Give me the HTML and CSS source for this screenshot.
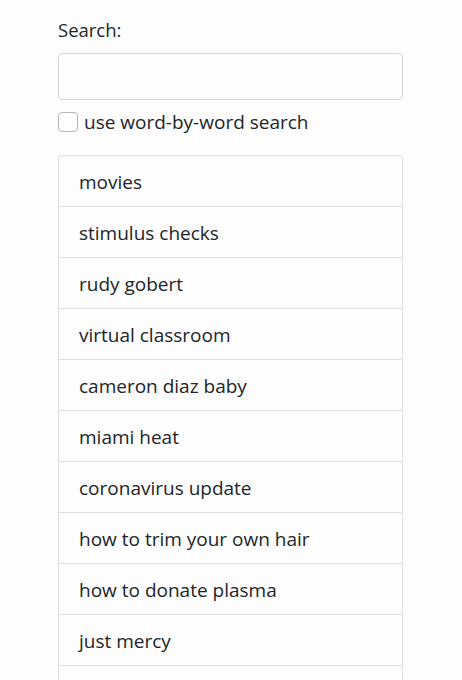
FILE: index.html
```html
<!DOCTYPE html>
<html>
<head>
<meta charset="utf-8">
<link rel="stylesheet" href="styles.css">
</head>
<body>
<div class="page">
  <label class="search-label" for="q">Search:</label>
  <input class="search-input" id="q" type="text">
  <div class="check-row">
    <span class="checkbox"></span>
    <span class="check-text">use word-by-word search</span>
  </div>
  <ul class="list">
    <li class="item">movies</li>
    <li class="item">stimulus checks</li>
    <li class="item">rudy gobert</li>
    <li class="item">virtual classroom</li>
    <li class="item">cameron diaz baby</li>
    <li class="item">miami heat</li>
    <li class="item">coronavirus update</li>
    <li class="item">how to trim your own hair</li>
    <li class="item">how to donate plasma</li>
    <li class="item">just mercy</li>
    <li class="item item-empty"></li>
  </ul>
</div>
</body>
</html>
```

FILE: styles.css
```css
html, body {
  margin: 0;
  padding: 0;
  background: #fdfdfd;
  overflow: hidden;
}
.page {
  padding: 17px 59px 0 58px;
  font-family: "Open Sans", "Noto Sans", sans-serif;
  font-size: 19px;
  color: #212529;
}
.search-label {
  display: block;
  font-size: 18.5px;
  line-height: 26px;
  margin-bottom: 10px;
}
.search-input {
  display: block;
  box-sizing: border-box;
  width: 100%;
  height: 47px;
  margin: 0;
  border: 1px solid #d6d6d6;
  border-radius: 4px;
  background: #fdfdfd;
}
.check-row {
  display: flex;
  align-items: center;
  gap: 6px;
  margin-top: 9px;
  line-height: 26px;
}
.checkbox {
  box-sizing: border-box;
  width: 20px;
  height: 20px;
  border: 1px solid #b5b5b5;
  border-radius: 4px;
  background: #fff;
}
.list {
  list-style: none;
  margin: 20px 0 0 0;
  padding: 0;
  border: 1px solid #dfdfdf;
  border-top: none;
  border-radius: 4px;
}
.item {
  border-top: 1px solid #dfdfdf;
  padding: 13px 20px 11px;
  line-height: 26px;
}
.item-empty {
  height: 26px;
}
.item:first-child {
  border-radius: 4px 4px 0 0;
}
```
